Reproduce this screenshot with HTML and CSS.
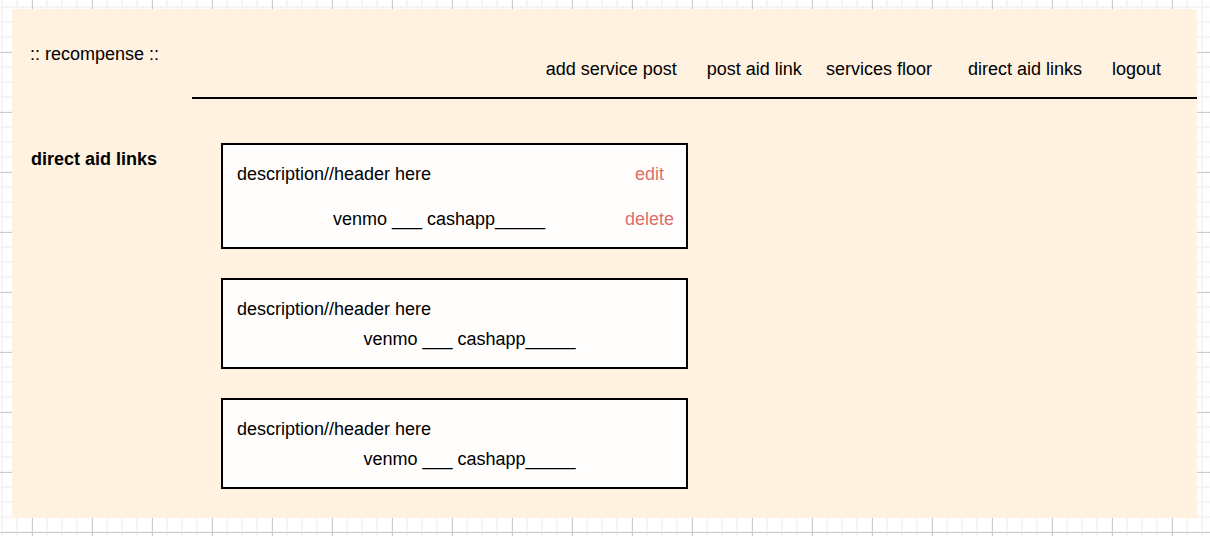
FILE: index.html
```html
<!DOCTYPE html>
<html lang="en">
<head>
  <meta charset="utf-8">
  <meta name="viewport" content="width=device-width, initial-scale=1">
  <title>recompense</title>
  <link rel="stylesheet" href="styles.css">
</head>
<body class="canvas">
  <div class="panel">
    <header class="header">
      <a class="brand" href="#">:: recompense ::</a>
      <nav class="nav">
        <a class="nav-link" href="#">add service post</a>
        <a class="nav-link nav-link-wide" href="#">post aid link</a>
        <a class="nav-link" href="#">services floor</a>
        <a class="nav-link nav-link-wider" href="#">direct aid links</a>
        <a class="nav-link nav-link-wide" href="#">logout</a>
      </nav>
    </header>
    <main class="main">
      <h1 class="title">direct aid links</h1>
      <div class="cards">
        <article class="card card-editable">
          <div class="card-body">
            <p class="description">description//header here</p>
            <p class="handles">venmo ___ cashapp_____</p>
          </div>
          <div class="actions">
            <button class="action" type="button">edit</button>
            <button class="action" type="button">delete</button>
          </div>
        </article>
        <article class="card">
          <div class="card-body">
            <p class="description">description//header here</p>
            <p class="handles">venmo ___ cashapp_____</p>
          </div>
        </article>
        <article class="card">
          <div class="card-body">
            <p class="description">description//header here</p>
            <p class="handles">venmo ___ cashapp_____</p>
          </div>
        </article>
      </div>
    </main>
  </div>
</body>
</html>
```

FILE: styles.css
```css
* {
  box-sizing: border-box;
}

/* Graph paper: a thin dark line every 60px, a pale line every 15px */
.canvas {
  display: flex;
  min-height: 100vh;
  margin: 0;
  padding: 9px 13px 18px 12px;
  background-color: #fff;
  background-image:
    linear-gradient(to right, #cbcbcb 1px, transparent 1px),
    linear-gradient(to bottom, #cbcbcb 1px, transparent 1px),
    linear-gradient(to right, #f5f5f5 2px, transparent 2px),
    linear-gradient(to bottom, #f5f5f5 2px, transparent 2px);
  background-size: 60px 60px, 60px 60px, 15px 15px, 15px 15px;
  background-position: 32px 0, 0 52px, 1px 0, 0 6px;
  color: #000;
  font: 18px/20px "Liberation Sans", Arial, sans-serif;
}

.panel {
  flex: 1;
  background: #fff2e0;
}

.header,
.main {
  display: grid;
  grid-template-columns: 180px 1fr;
}

.brand,
.nav-link {
  color: inherit;
  text-decoration: none;
}

.brand {
  padding: 35px 0 0 18px;
}

.nav {
  display: flex;
  flex-wrap: wrap;
  justify-content: flex-end;
  column-gap: 24px;
  padding: 50px 36px 18px 0;
  border-bottom: 2px solid #000;
}

.nav-link-wide {
  margin-left: 6px;
}

.nav-link-wider {
  margin-left: 12px;
}

.title {
  margin: 0;
  padding: 50px 0 0 19px;
  font-size: 18px;
  line-height: 20px;
}

.cards {
  display: flex;
  flex-direction: column;
  gap: 29px;
  max-width: 496px;
  padding: 44px 0 28px 29px;
}

.card {
  display: flex;
  padding: 19px 12px 18px 14px;
  border: 2px solid #000;
  background: #fffefd;
}

.card-body {
  display: flex;
  flex: 1;
  flex-direction: column;
  gap: 10px;
}

.description,
.handles {
  margin: 0;
}

.handles {
  padding-left: 28px;
  text-align: center;
}

.card-editable .card-body,
.card-editable .actions {
  gap: 25px;
}

.card-editable .handles {
  padding-left: 16px;
}

.actions {
  display: flex;
  flex-direction: column;
  align-items: center;
}

.action {
  padding: 0;
  border: 0;
  background: none;
  color: #dd6e69;
  font: inherit;
  cursor: pointer;
}
```
